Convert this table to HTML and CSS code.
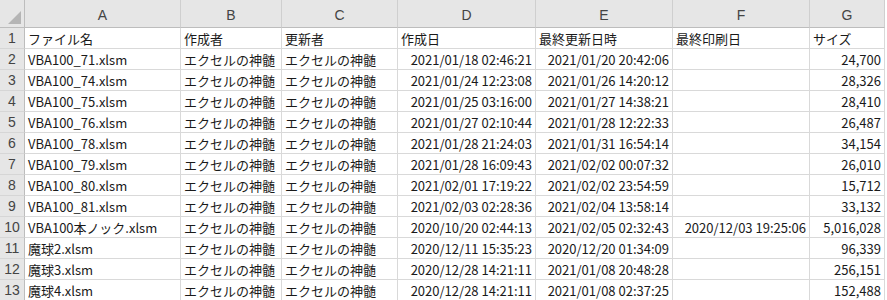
FILE: index.html
```html
<!DOCTYPE html>
<html lang="ja">
<head>
<meta charset="utf-8">
<title>Sheet</title>
<link rel="stylesheet" href="styles.css">
</head>
<body>
<div class="sheet">
  <div class="corner"><span class="tri"></span></div>
  <div class="ch">A</div><div class="ch">B</div><div class="ch">C</div><div class="ch">D</div><div class="ch">E</div><div class="ch">F</div><div class="ch">G</div>

  <div class="rh">1</div><div class="c">ファイル名</div><div class="c">作成者</div><div class="c">更新者</div><div class="c">作成日</div><div class="c">最終更新日時</div><div class="c">最終印刷日</div><div class="c">サイズ</div>

  <div class="rh">2</div><div class="c">VBA100_71.xlsm</div><div class="c">エクセルの神髄</div><div class="c">エクセルの神髄</div><div class="c r">2021/01/18 02:46:21</div><div class="c r">2021/01/20 20:42:06</div><div class="c r"></div><div class="c r">24,700</div>

  <div class="rh">3</div><div class="c">VBA100_74.xlsm</div><div class="c">エクセルの神髄</div><div class="c">エクセルの神髄</div><div class="c r">2021/01/24 12:23:08</div><div class="c r">2021/01/26 14:20:12</div><div class="c r"></div><div class="c r">28,326</div>

  <div class="rh">4</div><div class="c">VBA100_75.xlsm</div><div class="c">エクセルの神髄</div><div class="c">エクセルの神髄</div><div class="c r">2021/01/25 03:16:00</div><div class="c r">2021/01/27 14:38:21</div><div class="c r"></div><div class="c r">28,410</div>

  <div class="rh">5</div><div class="c">VBA100_76.xlsm</div><div class="c">エクセルの神髄</div><div class="c">エクセルの神髄</div><div class="c r">2021/01/27 02:10:44</div><div class="c r">2021/01/28 12:22:33</div><div class="c r"></div><div class="c r">26,487</div>

  <div class="rh">6</div><div class="c">VBA100_78.xlsm</div><div class="c">エクセルの神髄</div><div class="c">エクセルの神髄</div><div class="c r">2021/01/28 21:24:03</div><div class="c r">2021/01/31 16:54:14</div><div class="c r"></div><div class="c r">34,154</div>

  <div class="rh">7</div><div class="c">VBA100_79.xlsm</div><div class="c">エクセルの神髄</div><div class="c">エクセルの神髄</div><div class="c r">2021/01/28 16:09:43</div><div class="c r">2021/02/02 00:07:32</div><div class="c r"></div><div class="c r">26,010</div>

  <div class="rh">8</div><div class="c">VBA100_80.xlsm</div><div class="c">エクセルの神髄</div><div class="c">エクセルの神髄</div><div class="c r">2021/02/01 17:19:22</div><div class="c r">2021/02/02 23:54:59</div><div class="c r"></div><div class="c r">15,712</div>

  <div class="rh">9</div><div class="c">VBA100_81.xlsm</div><div class="c">エクセルの神髄</div><div class="c">エクセルの神髄</div><div class="c r">2021/02/03 02:28:36</div><div class="c r">2021/02/04 13:58:14</div><div class="c r"></div><div class="c r">33,132</div>

  <div class="rh">10</div><div class="c">VBA100本ノック.xlsm</div><div class="c">エクセルの神髄</div><div class="c">エクセルの神髄</div><div class="c r">2020/10/20 02:44:13</div><div class="c r">2021/02/05 02:32:43</div><div class="c r">2020/12/03 19:25:06</div><div class="c r">5,016,028</div>

  <div class="rh">11</div><div class="c">魔球2.xlsm</div><div class="c">エクセルの神髄</div><div class="c">エクセルの神髄</div><div class="c r">2020/12/11 15:35:23</div><div class="c r">2020/12/20 01:34:09</div><div class="c r"></div><div class="c r">96,339</div>

  <div class="rh">12</div><div class="c">魔球3.xlsm</div><div class="c">エクセルの神髄</div><div class="c">エクセルの神髄</div><div class="c r">2020/12/28 14:21:11</div><div class="c r">2021/01/08 20:48:28</div><div class="c r"></div><div class="c r">256,151</div>

  <div class="rh">13</div><div class="c">魔球4.xlsm</div><div class="c">エクセルの神髄</div><div class="c">エクセルの神髄</div><div class="c r">2020/12/28 14:21:11</div><div class="c r">2021/01/08 02:37:25</div><div class="c r"></div><div class="c r">152,488</div>
</div>
</body>
</html>
```

FILE: styles.css
```css
html, body {
  margin: 0;
  padding: 0;
  background: #ffffff;
}

body {
  font-family: "Noto Sans CJK JP", "Liberation Sans", sans-serif;
  font-size: 13px;
  color: #1a1a1a;
  overflow: hidden;
}

.sheet {
  display: grid;
  grid-template-columns: 25px 156px 101px 116px 138px 137px 137px 75px;
  grid-template-rows: 28px repeat(13, 21px);
  width: 885px;
}

.corner,
.ch,
.rh {
  background: #e6e6e6;
  color: #444444;
  box-sizing: border-box;
}

.corner {
  border-right: 1px solid #bdbdbd;
  border-bottom: 1px solid #bdbdbd;
  display: flex;
  align-items: flex-end;
  justify-content: flex-end;
  padding: 0 3px 3px 0;
}

.tri {
  width: 0;
  height: 0;
  border-left: 13px solid transparent;
  border-bottom: 13px solid #b5b5b5;
}

.ch {
  border-right: 1px solid #cfcfcf;
  border-bottom: 1px solid #bdbdbd;
  display: flex;
  align-items: center;
  justify-content: center;
  font-family: "Liberation Sans", "Noto Sans CJK JP", sans-serif;
  font-size: 14px;
  padding-top: 2px;
}

.rh {
  border-right: 1px solid #bdbdbd;
  border-bottom: 1px solid #d6d6d6;
  display: flex;
  align-items: center;
  justify-content: center;
  font-family: "Liberation Sans", "Noto Sans CJK JP", sans-serif;
  font-size: 14px;
}

.c {
  box-sizing: border-box;
  border-right: 1px solid #d9d9d9;
  border-bottom: 1px solid #d9d9d9;
  padding: 0 3px;
  display: flex;
  align-items: center;
  white-space: nowrap;
  overflow: visible;
  line-height: 1;
}

.r {
  justify-content: flex-end;
}
```
